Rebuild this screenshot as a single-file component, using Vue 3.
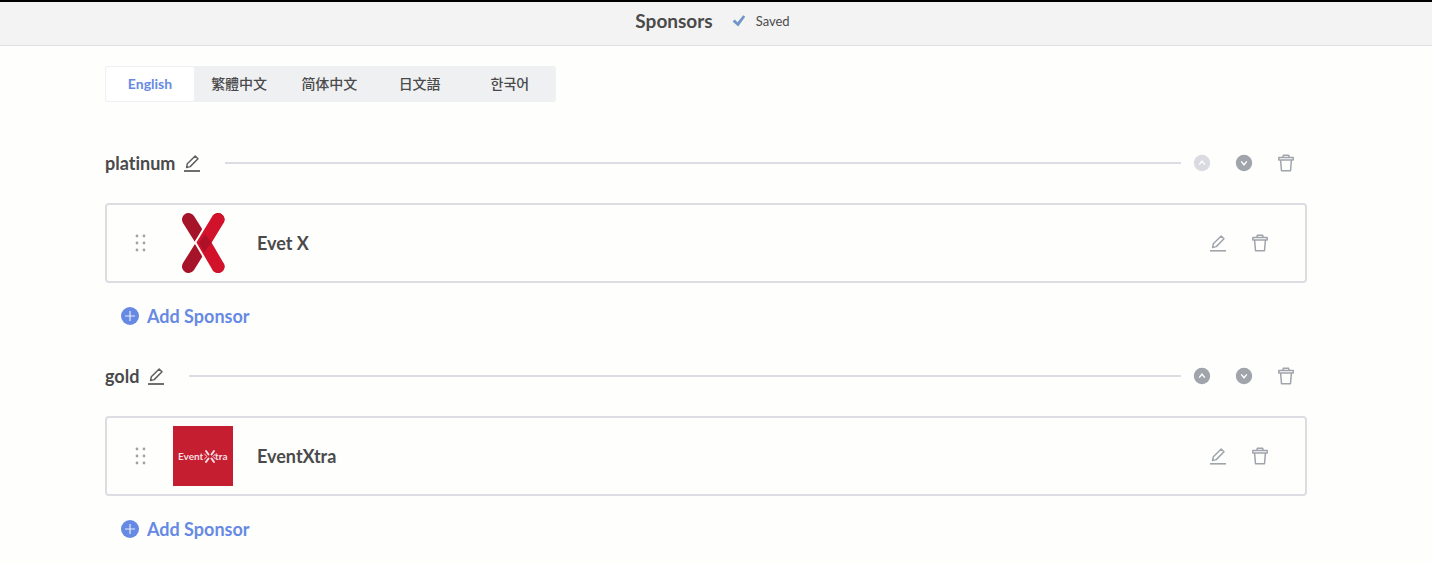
<script setup>
import { ref } from 'vue'

const languages = ['English', '繁體中文', '简体中文', '日文語', '한국어']
const activeLanguage = ref('English')

const tiers = [
  { name: 'platinum', sponsor: 'Evet X', logo: 'cross', first: true },
  { name: 'gold', sponsor: 'EventXtra', logo: 'square', first: false },
]
</script>

<template>
  <div class="page">
    <header class="topbar">
      <h1 class="title">Sponsors</h1>
      <span class="status">
        <svg class="check" viewBox="0 0 14 14" aria-hidden="true">
          <path d="M0.6 7.4 2.8 5.4 5.6 8.2 11.2 1.2 13.2 2.8 6.2 12.4Z" fill="#7096c8" />
        </svg>
        Saved
      </span>
    </header>

    <main class="content">
      <nav class="languages" aria-label="Language">
        <button
          v-for="language in languages"
          :key="language"
          type="button"
          class="language"
          :class="{ active: language === activeLanguage }"
          @click="activeLanguage = language"
        >
          {{ language }}
        </button>
      </nav>

      <section v-for="tier in tiers" :key="tier.name" class="tier">
        <div class="tier-head">
          <h2 class="tier-name">{{ tier.name }}</h2>
          <button type="button" class="icon-button dark" aria-label="Rename tier">
            <svg viewBox="0 0 18 18" class="icon">
              <path d="M1 17H17" stroke-width="1.8" />
              <path d="M3.6 13.6 4.3 9.8 12.2 2 15 4.7 7.2 12.6Z" stroke-width="1.5" stroke-linejoin="round" />
            </svg>
          </button>
          <span class="rule"></span>
          <div class="actions">
            <button type="button" class="icon-button" :disabled="tier.first" aria-label="Move up">
              <svg viewBox="0 0 18 18" class="icon">
                <circle cx="9" cy="9" r="8.2" class="disc" />
                <path d="M6.2 10.6 9 7.2 11.8 10.6" class="chevron" />
              </svg>
            </button>
            <button type="button" class="icon-button" aria-label="Move down">
              <svg viewBox="0 0 18 18" class="icon">
                <circle cx="9" cy="9" r="8.2" class="disc" />
                <path d="M6.2 7.4 9 10.8 11.8 7.4" class="chevron" />
              </svg>
            </button>
            <button type="button" class="icon-button" aria-label="Delete tier">
              <svg viewBox="0 0 18 18" class="icon">
                <path d="M1.8 3.4H16.2V6H1.8ZM5.8 3.2 6.4 1.2H11.6L12.2 3.2M3.6 6.2 4.5 16.8H13.5L14.4 6.2" stroke-width="1.5" stroke-linejoin="round" />
              </svg>
            </button>
          </div>
        </div>

        <article class="card">
          <svg class="grip" viewBox="0 0 12 18" aria-hidden="true">
            <g fill="#a0a2a8">
              <circle cx="3" cy="2" r="1.4" /><circle cx="10" cy="2" r="1.4" />
              <circle cx="3" cy="9" r="1.4" /><circle cx="10" cy="9" r="1.4" />
              <circle cx="3" cy="16" r="1.4" /><circle cx="10" cy="16" r="1.4" />
            </g>
          </svg>
          <svg v-if="tier.logo === 'cross'" class="logo" viewBox="0 0 60 60" aria-hidden="true">
            <path d="M15.5 6.5 45 53.5M45 6.5 15.5 53.5" stroke="#a51428" stroke-width="13" stroke-linecap="round" />
            <path d="M45 6.5 31 29.5 45 53.5" stroke="#fefefd" stroke-width="17" stroke-linejoin="miter" />
            <path d="M45 6.5 31 29.5 45 53.5" stroke="#d2122b" stroke-width="13" stroke-linecap="round" stroke-linejoin="miter" />
            <path d="M32 21 38.5 29.5 31 39 26 30Z" fill="#ae1028" />
          </svg>
          <svg v-else class="logo" viewBox="0 0 60 60" aria-hidden="true">
            <path d="M0 0H60V60H0Z" fill="#c41e30" />
            <text x="5" y="34" class="logo-text">Event</text>
            <text x="42" y="34" class="logo-text">tra</text>
            <g stroke="#f8dfe2" stroke-width="2" stroke-linecap="round">
              <path d="M33 25 35.5 28.5M41 25 38.5 28.5M33 36 35.5 32.5M41 36 38.5 32.5" />
              <path d="M31.5 28 34 30.5 31.5 33M42.5 28 40 30.5 42.5 33" stroke-width="1" />
            </g>
          </svg>
          <h3 class="sponsor">{{ tier.sponsor }}</h3>
          <div class="card-actions">
            <button type="button" class="icon-button" aria-label="Edit sponsor">
              <svg viewBox="0 0 18 18" class="icon">
                <path d="M1 16.8H17" stroke-width="1.6" />
                <path d="M3.6 13.6 4.3 9.8 12.2 2 15 4.7 7.2 12.6Z" stroke-width="1.5" stroke-linejoin="round" />
              </svg>
            </button>
            <button type="button" class="icon-button" aria-label="Delete sponsor">
              <svg viewBox="0 0 18 18" class="icon">
                <path d="M1.8 3.4H16.2V6H1.8ZM5.8 3.2 6.4 1.2H11.6L12.2 3.2M3.6 6.2 4.5 16.8H13.5L14.4 6.2" stroke-width="1.5" stroke-linejoin="round" />
              </svg>
            </button>
          </div>
        </article>

        <button type="button" class="add">
          <svg class="plus" viewBox="0 0 18 18" aria-hidden="true">
            <circle cx="9" cy="9" r="9" fill="#668ae4" />
            <path d="M9 4V14M4 9H14" stroke="#e4ebfc" stroke-width="1.2" />
          </svg>
          Add Sponsor
        </button>
      </section>
    </main>
  </div>
</template>

<style>
body {
  margin: 0;
  background: #fefefd;
}
</style>

<style scoped>
.page {
  box-sizing: border-box;
  min-height: 100vh;
  font-family: Lato, "Noto Sans CJK TC", "Noto Sans CJK KR", sans-serif;
  font-variant-ligatures: none;
  color: #4a4a4b;
}
h1, h2, h3 {
  margin: 0;
  font-weight: 700;
}
button {
  padding: 0;
  border: 0;
  background: none;
  font-family: inherit;
  color: inherit;
}
.topbar {
  display: flex;
  align-items: center;
  justify-content: center;
  gap: 19px;
  box-sizing: border-box;
  height: 46px;
  padding: 0 7px 6px 0;
  border-top: 2px solid #000;
  border-bottom: 1px solid #dfe0e3;
  background: #f3f3f3;
}
.title {
  font-size: 19px;
  line-height: 24px;
}
.status {
  display: flex;
  align-items: center;
  gap: 10px;
  font-size: 13px;
  line-height: 20px;
}
.check {
  width: 14px;
  height: 14px;
}
.content {
  padding: 20px 125px 0 105px;
}
.languages {
  display: grid;
  grid-template-columns: 88px repeat(4, 1fr);
  box-sizing: border-box;
  width: 451px;
  height: 36px;
  margin-bottom: 43px;
  padding: 1px;
  border-radius: 3px;
  background: #eff0f2;
}
.language {
  font-size: 14px;
  font-weight: 500;
  line-height: 20px;
}
.language.active {
  border-radius: 2px;
  background: #fff;
  font-weight: 700;
  color: #668ae4;
}
.tier {
  margin-bottom: 30px;
}
.tier-head {
  display: flex;
  align-items: center;
  height: 36px;
  margin-bottom: 22px;
  padding-right: 12px;
}
.tier-name {
  margin-right: 8px;
  font-size: 18px;
  line-height: 24px;
}
.icon-button {
  display: block;
  width: 18px;
  height: 18px;
  color: #a0a4ab;
}
.icon-button.dark {
  color: #5f5f62;
}
.icon-button:disabled {
  color: #d9dbe1;
}
.icon {
  display: block;
  width: 18px;
  height: 18px;
  fill: none;
  stroke: currentColor;
}
.disc {
  fill: currentColor;
  stroke: none;
}
.chevron {
  stroke: #fefefd;
  stroke-width: 1.4;
}
.rule {
  flex: 1;
  height: 2px;
  margin: 0 12px 0 24px;
  background: #dcdde2;
}
.actions,
.card-actions {
  display: flex;
  gap: 24px;
}
.card {
  display: flex;
  align-items: center;
  box-sizing: border-box;
  height: 80px;
  margin-bottom: 21px;
  padding: 0 36px 0 27px;
  border: 2px solid #dcdde2;
  border-radius: 4px;
}
.grip {
  width: 12px;
  height: 18px;
  margin-right: 27px;
}
.logo {
  width: 60px;
  height: 60px;
  margin-right: 24px;
  fill: none;
}
.logo-text {
  fill: #f8dfe2;
  font-size: 10px;
  font-weight: 700;
}
.sponsor {
  flex: 1;
  font-size: 18px;
  line-height: 24px;
}
.add {
  display: flex;
  align-items: center;
  gap: 8px;
  margin-left: 16px;
  font-size: 18px;
  font-weight: 700;
  line-height: 24px;
  color: #668ae4;
}
.plus {
  width: 18px;
  height: 18px;
}
</style>
